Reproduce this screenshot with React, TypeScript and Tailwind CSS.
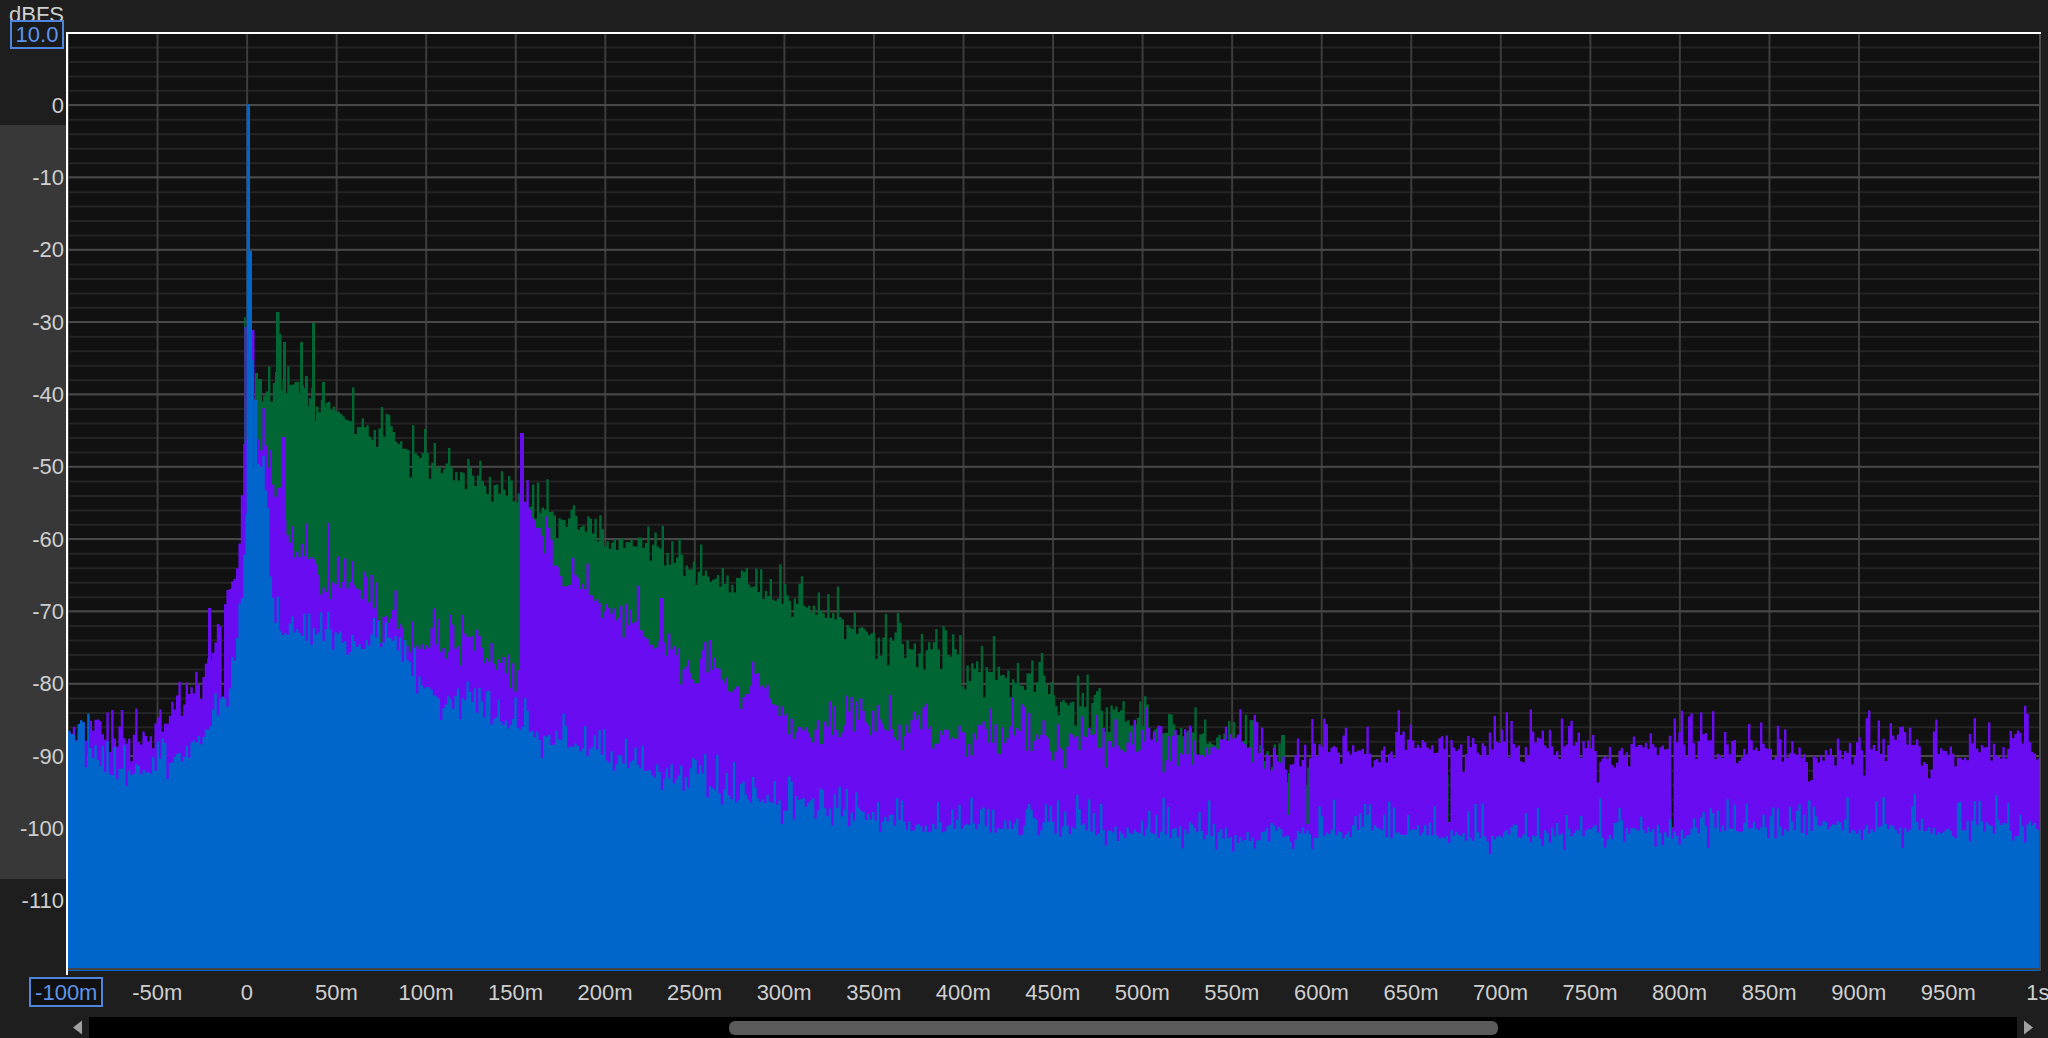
const LEFT = 68;
const RIGHT = 2039;
const BOTTOM = 968;
const ZERO_Y = 105;
const DB_STEP = 7.233;
const TIME_STEP = 89.55;

type Pt = [number, number];
type Rect = [number, number, number];

const dbLabels = ["0", "-10", "-20", "-30", "-40", "-50", "-60", "-70", "-80", "-90", "-100", "-110"];
const timeLabels = [
  "-50m", "0", "50m", "100m", "150m", "200m", "250m", "300m", "350m", "400m", "450m",
  "500m", "550m", "600m", "650m", "700m", "750m", "800m", "850m", "900m", "950m", "1s",
];

const greenBase: Pt[] = [
  [244, 420], [250, 400], [258, 400], [262, 398], [287, 392], [340, 422], [392, 448], [444, 476],
  [516, 508], [562, 528], [591, 548], [654, 556], [716, 590], [799, 612], [865, 642], [940, 660],
  [1048, 703], [1123, 726], [1189, 745], [1240, 752], [1300, 790], [1350, 850], [2039, 850],
];
const purpleBase: Pt[] = [
  [68, 742], [90, 755], [107, 762], [150, 755], [160, 738], [177, 718], [193, 708], [205, 675],
  [217, 678], [228, 595], [237, 580], [243, 450], [250, 430], [257, 440], [265, 480], [273, 525],
  [293, 575], [320, 590], [350, 625], [393, 640], [403, 660], [460, 655], [477, 660], [513, 700],
  [517, 700], [519, 625], [525, 530], [530, 525], [550, 585], [591, 625], [654, 670], [716, 697],
  [766, 715], [799, 745], [882, 745], [965, 757], [1069, 767], [1189, 772], [2039, 772],
];
const blueBase: Pt[] = [
  [68, 738], [85, 753], [107, 780], [150, 780], [170, 768], [193, 752], [217, 724], [227, 702],
  [235, 662], [241, 600], [245, 520], [250, 470], [258, 465], [264, 480], [270, 595], [278, 630],
  [293, 640], [360, 652], [393, 652], [405, 675], [437, 708], [493, 726], [560, 750], [591, 760],
  [633, 776], [695, 785], [737, 808], [799, 813], [882, 832], [965, 834], [1048, 840], [1200, 842],
  [1500, 842], [1800, 838], [2039, 835],
];

const greenRects: Rect[] = [
  [244, 1.5, 317], [255, 3, 373], [258, 4, 379], [275, 2, 372], [276, 3.5, 312], [278.5, 3, 334],
  [283, 3, 342], [300, 3, 342], [305, 3, 376], [312, 3, 323], [322, 3, 382], [225, 3, 663],
  [1224, 3, 738], [1281, 4, 735], [1288, 1.5, 806], [1305, 3, 785], [1447, 1.5, 775], [1669.5, 2, 800],
];
const purpleRects: Rect[] = [
  [244.5, 2, 327], [252, 2.5, 330], [208, 3, 608], [282, 4, 437], [520, 4, 433], [327, 3, 523], [660, 3, 598],
];
const blueRects: Rect[] = [[246.7, 3.3, 104], [250, 2, 251], [252, 1.5, 360], [254, 3, 400]];

const rng = (seed: number) => () => {
  seed = (seed + 0x6d2b79f5) | 0;
  let t = Math.imul(seed ^ (seed >>> 15), 1 | seed);
  t = (t + Math.imul(t ^ (t >>> 7), 61 | t)) ^ t;
  return ((t ^ (t >>> 14)) >>> 0) / 4294967296;
};

const interp = (pts: Pt[], x: number) => {
  for (let i = 1; i < pts.length; i++) {
    if (x <= pts[i][0]) {
      const [x0, y0] = pts[i - 1];
      const [x1, y1] = pts[i];
      return y0 + ((y1 - y0) * (x - x0)) / (x1 - x0);
    }
  }
  return pts[pts.length - 1][1];
};

type Noise = {
  seed: number;
  period: number;
  jit: number;
  bump: number;
  pSpike: number;
  spike: number;
  pNotch: number;
  notch: number;
};

const buildPath = (pts: Pt[], rects: Rect[], start: number, n: Noise, dips: Pt[] = []) => {
  const rand = rng(n.seed);
  const step = 2.4;
  // slow clusters so the top edge bunches up like real noise
  const knots = Array.from({ length: 300 }, () => rand());
  const smooth = (x: number) => {
    const u = (x - LEFT) / n.period;
    const i = Math.floor(u);
    const f = u - i;
    const k = f * f * (3 - 2 * f);
    return knots[i % 300] * (1 - k) + knots[(i + 1) % 300] * k;
  };
  let d = `M${start} ${BOTTOM}`;
  for (let x = start; x < RIGHT; x += step) {
    const calm = x > 240 && x < 262 ? 0.15 : 1;
    let y = interp(pts, x) - (smooth(x) * n.bump + Math.pow(rand(), 1.4) * n.jit) * calm;
    const r = rand();
    if (r < n.pSpike) y -= (0.3 + rand() * 0.7) * n.spike * calm;
    else if (r < n.pSpike + n.pNotch) y += (0.3 + rand() * 0.7) * n.notch * calm;
    for (const [dx, dy] of dips) if (Math.abs(dx - x) < 1.3) y = dy;
    d += `V${y.toFixed(1)}H${Math.min(x + step, RIGHT).toFixed(1)}`;
  }
  d += `V${BOTTOM}Z`;
  for (const [x, w, y] of rects) d += `M${x} ${BOTTOM}V${y}H${x + w}V${BOTTOM}Z`;
  return d;
};

const greenPath = buildPath(greenBase, greenRects, 244, {
  seed: 11, period: 12, jit: 12, bump: 8, pSpike: 0.24, spike: 30, pNotch: 0.14, notch: 26,
});
const purplePath = buildPath(
  purpleBase,
  purpleRects,
  LEFT,
  { seed: 29, period: 15, jit: 14, bump: 34, pSpike: 0.24, spike: 32, pNotch: 0.12, notch: 22 },
  [[222, 700], [1288, 815], [1306, 824], [1447, 822], [1670.5, 828]],
);
const bluePath = buildPath(blueBase, blueRects, LEFT, {
  seed: 47, period: 14, jit: 12, bump: 8, pSpike: 0.22, spike: 30, pNotch: 0.1, notch: 16,
});

function Spectrum() {
  const hMinor = Array.from({ length: 66 }, (_, i) => 33 + i * (DB_STEP * 2));
  const hMajor = Array.from({ length: 13 }, (_, i) => ZERO_Y + i * (DB_STEP * 10));
  const vLines = Array.from({ length: 21 }, (_, i) => LEFT + i * TIME_STEP);
  return (
    <svg width={RIGHT - LEFT} height={BOTTOM - 34} viewBox={`${LEFT} 34 ${RIGHT - LEFT} ${BOTTOM - 34}`} className="block">
      {hMinor.map((y) => (
        <line key={y} x1={LEFT} x2={RIGHT} y1={y} y2={y} stroke="#242424" strokeWidth="2" />
      ))}
      {vLines.map((x) => (
        <line key={x} x1={x} x2={x} y1={34} y2={BOTTOM} stroke="#3c3c3c" strokeWidth="2" />
      ))}
      {hMajor.map((y) => (
        <line key={y} x1={LEFT} x2={RIGHT} y1={y} y2={y} stroke="#484848" strokeWidth="2" />
      ))}
      <path d={greenPath} fill="#006633" />
      <path d={purplePath} fill="#6a0cf2" />
      <path d={bluePath} fill="#0066cc" />
    </svg>
  );
}

export default function App() {
  return (
    <div
      className="w-[2048px] h-[1038px] bg-[#1e1e1e] text-[22px] text-[#cfcfcf] overflow-hidden flex flex-col"
      style={{ fontFamily: '"Liberation Sans", Arial, sans-serif' }}
    >
      <div className="flex h-[971px]">
        {/* level axis */}
        <div className="relative w-[66px] shrink-0 flex flex-col items-end pr-[2px]">
          <div className="absolute left-0 right-0 top-[125px] h-[754px] bg-[#383838]" />
          <div className="relative h-[20px] w-[56px] overflow-hidden leading-[29px] whitespace-nowrap text-right">dBFS</div>
          <div className="relative h-[29px] w-[54px] flex items-center justify-center border-2 border-[#4f86dc] bg-[#1a1a1a] text-[#5e94ea]">
            10.0
          </div>
          <div className="relative mt-[20px] flex flex-col items-end">
            {dbLabels.map((l) => (
              <div key={l} className="h-[72.33px] flex items-center">
                {l}
              </div>
            ))}
          </div>
        </div>
        {/* plot */}
        <div className="pt-[32px] pr-[8px]">
          <div className="relative border-t-2 border-l-2 border-white bg-[#111111]">
            <div className="border-r-2 border-[#4a4a4a]">
              <Spectrum />
              <div className="h-[2px] bg-[#444444]" />
              <div className="h-[1px] bg-[#0066cc]" />
            </div>
            <div className="absolute -left-[2px] top-full w-[2px] h-[4px] bg-white" />
          </div>
        </div>
      </div>

      {/* time axis */}
      <div className="h-[46px] pb-[4px] flex items-center pl-[23px] whitespace-nowrap">
        <div className="w-[89.55px] shrink-0 flex justify-center">
          <span className="h-[30px] w-[74px] -ml-[3px] flex items-center justify-center border-2 border-[#4f86dc] bg-[#111111] text-[#5e94ea]">
            -100m
          </span>
        </div>
        {timeLabels.map((l) => (
          <div key={l} className="w-[89.55px] shrink-0 text-center">
            {l}
          </div>
        ))}
      </div>

      {/* scrollbar */}
      <div className="h-[21px] flex items-center">
        <svg width="89" height="21" className="shrink-0">
          <path d="M73 10.5 82 3.5V17.5Z" fill="#a0a0a0" />
        </svg>
        <div className="w-[1928px] h-full bg-black flex items-center pl-[640px]">
          <div className="w-[769px] h-[14px] rounded-[6px] bg-[#5a5a5a]" />
        </div>
        <svg width="31" height="21" className="shrink-0">
          <path d="M16 10.5 7 3.5V17.5Z" fill="#a0a0a0" />
        </svg>
      </div>
    </div>
  );
}
